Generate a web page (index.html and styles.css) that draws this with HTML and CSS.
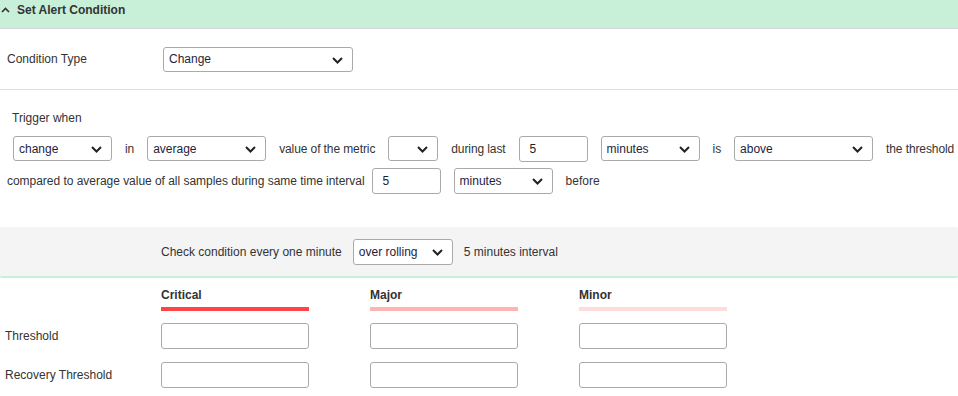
FILE: index.html
```html
<!DOCTYPE html>
<html lang="en">
<head>
    <meta charset="UTF-8">
    <title>Set Alert Condition</title>
    <link rel="stylesheet" href="styles.css">
</head>
<body>
    <div class="panel">
        <!-- Header -->
        <div class="panel-header">
            <svg class="caret" width="9" height="6" viewBox="0 0 9 6"><path d="M1 5 L4.5 1.5 L8 5" fill="none" stroke="#333" stroke-width="1.6"/></svg>
            <span>Set Alert Condition</span>
        </div>

        <!-- Condition type -->
        <div class="type-row">
            <span class="type-label">Condition Type</span>
            <div class="select w190">
                <select><option>Change</option></select>
                <svg class="chev" width="11" height="7" viewBox="0 0 11 7"><path d="M1 1 L5.5 5.5 L10 1" fill="none" stroke="#222" stroke-width="2"/></svg>
            </div>
        </div>

        <!-- Trigger -->
        <div class="trigger">
            <div class="trigger-title">Trigger when</div>
            <div class="line line-1">
                <div class="select w99">
                    <select><option>change</option></select>
                    <svg class="chev" width="11" height="7" viewBox="0 0 11 7"><path d="M1 1 L5.5 5.5 L10 1" fill="none" stroke="#222" stroke-width="2"/></svg>
                </div>
                <span class="txt">in</span>
                <div class="select w119">
                    <select><option>average</option></select>
                    <svg class="chev" width="11" height="7" viewBox="0 0 11 7"><path d="M1 1 L5.5 5.5 L10 1" fill="none" stroke="#222" stroke-width="2"/></svg>
                </div>
                <span class="txt">value of the metric</span>
                <div class="select w50">
                    <select><option></option></select>
                    <svg class="chev" width="11" height="7" viewBox="0 0 11 7"><path d="M1 1 L5.5 5.5 L10 1" fill="none" stroke="#222" stroke-width="2"/></svg>
                </div>
                <span class="txt">during last</span>
                <input class="field w69" type="text" value="5">
                <div class="select w99">
                    <select><option>minutes</option></select>
                    <svg class="chev" width="11" height="7" viewBox="0 0 11 7"><path d="M1 1 L5.5 5.5 L10 1" fill="none" stroke="#222" stroke-width="2"/></svg>
                </div>
                <span class="txt">is</span>
                <div class="select w139">
                    <select><option>above</option></select>
                    <svg class="chev" width="11" height="7" viewBox="0 0 11 7"><path d="M1 1 L5.5 5.5 L10 1" fill="none" stroke="#222" stroke-width="2"/></svg>
                </div>
                <span class="txt">the threshold</span>
            </div>
            <div class="line line-2">
                <span class="txt lead">compared to average value of all samples during same time interval</span>
                <input class="field w69" type="text" value="5">
                <div class="select w99">
                    <select><option>minutes</option></select>
                    <svg class="chev" width="11" height="7" viewBox="0 0 11 7"><path d="M1 1 L5.5 5.5 L10 1" fill="none" stroke="#222" stroke-width="2"/></svg>
                </div>
                <span class="txt">before</span>
            </div>
        </div>

        <!-- Check interval -->
        <div class="check-band">
            <span class="txt">Check condition every one minute</span>
            <div class="select w100">
                <select><option>over rolling</option></select>
                <svg class="chev" width="11" height="7" viewBox="0 0 11 7"><path d="M1 1 L5.5 5.5 L10 1" fill="none" stroke="#222" stroke-width="2"/></svg>
            </div>
            <span class="txt">5 minutes interval</span>
        </div>

        <!-- Thresholds -->
        <div class="levels">
            <div></div>
            <div class="level critical">Critical</div>
            <div class="level major">Major</div>
            <div class="level minor">Minor</div>

            <div class="row-label">Threshold</div>
            <input class="field" type="text">
            <input class="field" type="text">
            <input class="field" type="text">

            <div class="row-label">Recovery Threshold</div>
            <input class="field" type="text">
            <input class="field" type="text">
            <input class="field" type="text">
        </div>
    </div>
</body>
</html>
```

FILE: styles.css
```css
/* General Reset */
body, html {
    margin: 0;
    padding: 0;
    background: #fff;
    font-family: "Liberation Sans", Arial, sans-serif;
    font-size: 12px;
    color: #333;
}

/* Header */
.panel-header {
    height: 29px;
    background: #c8efd7;
    border-bottom: 1px solid #d6d6d6;
    display: flex;
    align-items: flex-start;
    padding: 3px 0 0 1px;
    box-sizing: border-box;
    font-weight: bold;
    color: #333;
}

.caret {
    margin: 4px 7px 0 0;
}

/* Condition type */
.type-row {
    height: 60px;
    display: flex;
    align-items: center;
    padding-left: 7px;
    border-bottom: 1px solid #dcdcdc;
}

.type-label {
    width: 156px;
}

/* Select boxes */
.select {
    position: relative;
    height: 25px;
    flex: none;
}

.select select {
    appearance: none;
    -webkit-appearance: none;
    width: 100%;
    height: 100%;
    margin: 0;
    padding: 0 0 0 5px;
    border: 1px solid #aaa;
    border-radius: 3px;
    background: #fff;
    font-family: inherit;
    font-size: 12px;
    color: #1e1e3c;
    box-sizing: border-box;
}

.chev {
    position: absolute;
    right: 10px;
    top: 10px;
    pointer-events: none;
}

.field {
    height: 26px;
    margin: 0;
    padding: 0 0 0 10px;
    border: 1px solid #aaa;
    border-radius: 3px;
    font-family: inherit;
    font-size: 12px;
    color: #222;
    box-sizing: border-box;
    flex: none;
}

.w50 { width: 50px; }
.w69 { width: 69px; }
.w99 { width: 99px; }
.w100 { width: 100px; }
.w119 { width: 119px; }
.w139 { width: 139px; }
.w190 { width: 190px; }

.txt {
    white-space: nowrap;
}

/* Trigger */
.trigger {
    padding-top: 21px;
    height: 137px;
    box-sizing: border-box;
}

.trigger-title {
    padding-left: 12px;
    margin-bottom: 11px;
}

.line {
    display: flex;
    align-items: center;
    gap: 13px;
}

.line-1 {
    padding-left: 13px;
    height: 25px;
}

.line-1 .txt {
    letter-spacing: -0.1px;
}

.line-2 {
    padding-left: 7px;
    margin-top: 7px;
    height: 26px;
}

.line-2 .txt.lead {
    margin-right: -6px;
    letter-spacing: -0.03px;
}

.line-2 .select {
    height: 26px;
}

/* Check interval band */
.check-band {
    height: 51px;
    background: #f4f4f4;
    border-bottom: 2px solid #c8efd7;
    border-radius: 2px;
    display: flex;
    align-items: center;
    gap: 11px;
    padding: 1px 0 0 161px;
    box-sizing: border-box;
}

.check-band .select {
    height: 26px;
}

/* Thresholds */
.levels {
    display: grid;
    grid-template-columns: 95px 148px 148px 148px;
    column-gap: 61px;
    row-gap: 13px;
    padding: 10px 0 0 5px;
    align-items: center;
}

.row-label {
    white-space: nowrap;
}

.level {
    font-weight: bold;
    padding-bottom: 5px;
    border-bottom: 4px solid;
    line-height: 14px;
    margin-bottom: -1px;
}

.critical { border-color: #ff4545; }
.major { border-color: #ffb4b4; }
.minor { border-color: #ffdcdc; }

.levels .field {
    width: 148px;
}
```
